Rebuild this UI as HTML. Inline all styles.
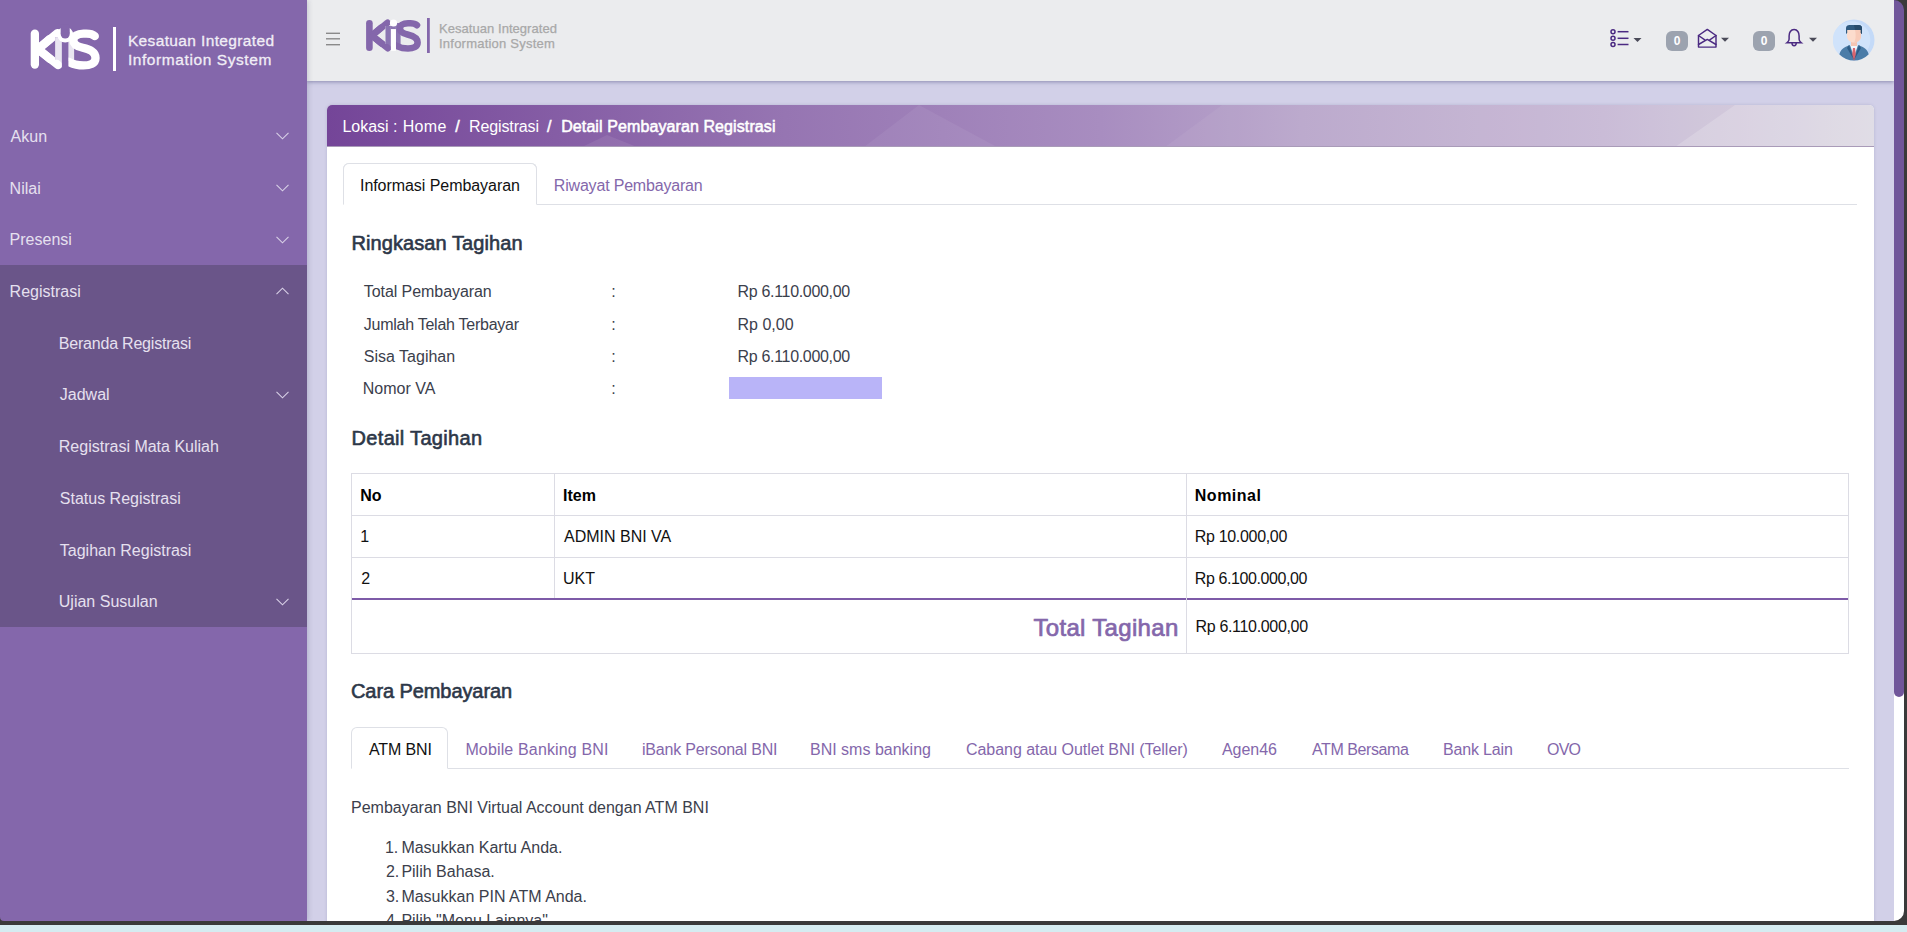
<!DOCTYPE html>
<html><head><meta charset="utf-8">
<style>
*{box-sizing:border-box;margin:0;padding:0}
html,body{width:1907px;height:932px;overflow:hidden}
body{position:relative;background:#D2D0E8;font-family:"Liberation Sans",sans-serif;font-size:16px;color:#333}
.abs{position:absolute;white-space:nowrap}
#sidebar{position:absolute;left:0;top:0;width:307px;height:921px;background:#8467AB;z-index:3;box-shadow:1px 0 5px rgba(60,60,100,.22)}
#grp{position:absolute;left:0;top:265px;width:307px;height:362px;background:#6A5589}
.mi{position:absolute;left:11px;font-size:16px;line-height:24px;color:#E4DDEE}
.sub{left:59px}
.chev{position:absolute;left:276px;width:13px;height:8px}
#header{position:absolute;left:307px;top:0;width:1587px;height:81px;background:#EBECEE;z-index:2;box-shadow:0 1px 4px rgba(80,80,130,.55)}
#card{position:absolute;left:327px;top:105px;width:1547px;height:830px;background:#fff;border-radius:5px 5px 0 0;box-shadow:0 0 3px rgba(100,100,140,.25)}
#crumb{position:absolute;left:0;top:0;width:1547px;height:42px;border-radius:5px 5px 0 0;overflow:hidden;background:linear-gradient(90deg,#744598 0%,#9675B2 29.6%,#A88DC0 50%,#B9A6CB 63%,#C8B9D5 82.5%,#CFC5DA 90%,#D8D4E0 100%);border-bottom:1px solid #A99BB8}
.t16{font-size:16px;line-height:24px}
.tab{position:absolute;height:42px;border:1px solid #DEE0E6;border-bottom:1px solid #fff;border-radius:6px 6px 0 0;background:#fff}
.tabline{position:absolute;height:1px;background:#DEE0E6}
.h5{position:absolute;font-size:20px;line-height:24px;color:#2D3748;font-weight:bold;letter-spacing:-0.6px}
.lnk{color:#8467AB}
table.dt{position:absolute;left:351px;top:473px;width:1498px;border-collapse:collapse}
table.dt td{border:1px solid #DADAE2;padding:0 9px;height:42px;color:#111;font-size:16px;line-height:24px}
#sb{position:absolute;left:1894px;top:0;width:10px;height:921px;background:#fff;z-index:4}
#thumb{position:absolute;left:0;top:0;width:10px;height:697px;background:#70569A;border-radius:0 0 5px 5px}
#frR{position:absolute;left:1904px;top:0;width:3px;height:925px;background:#3A3A3A;z-index:5}
#frB{position:absolute;left:0;top:921px;width:1907px;height:4px;background:#3A3A3A;z-index:5}
#cyan{position:absolute;left:0;top:925px;width:1907px;height:7px;background:#D5ECF1;z-index:5}
.badge{top:31px;width:22px;height:20px;border-radius:6px;background:#9CA3AF;color:#fff;font-size:12px;line-height:20px;text-align:center;font-weight:bold}
.k{position:absolute;white-space:nowrap;font-size:16px;line-height:24px}
.hl{position:absolute;height:1px;background:#DCDCE4}
.vl{position:absolute;width:1px;background:#DCDCE4}
.t{position:absolute;white-space:nowrap;font-family:"Liberation Sans",sans-serif;z-index:4}
</style></head><body>

<div id="sidebar">
  <svg class="abs" style="left:23.4px;top:21.8px" width="90.7" height="55.4" viewBox="0 0 72 44">
    <g>
      <rect x="25.5" y="12" width="5.4" height="24" fill="#E9E5F1"/>
      <rect x="35.9" y="9" width="4.7" height="22" fill="#E9E5F1"/>
      <g fill="none" stroke="#FFFFFF" stroke-linecap="round" stroke-width="6.6">
        <line x1="9.4" y1="9.3" x2="9.4" y2="33.8"/>
        <line x1="12.5" y1="21" x2="21" y2="13.7"/>
        <line x1="13" y1="22.5" x2="21.5" y2="29.5"/>
      </g>
      <clipPath id="kcFFFFFF"><rect x="0" y="0" width="25.5" height="44"/><rect x="25.5" y="0" width="5.4" height="12"/><rect x="25.5" y="30" width="5.4" height="14"/></clipPath>
      <g clip-path="url(#kcFFFFFF)" fill="none" stroke="#FFFFFF" stroke-linecap="round" stroke-width="6.6">
        <line x1="12.5" y1="21" x2="27.5" y2="8.8"/>
        <line x1="13" y1="22.5" x2="27.8" y2="34.2"/>
      </g>
      <clipPath id="scFFFFFF"><rect x="35.9" y="0" width="40" height="44"/></clipPath>
      <path clip-path="url(#scFFFFFF)" d="M57 11.2 C54 8.6,50.5 9.3,48 9.3 C43 9.3,40 11.5,40 14.5 C40 18,43 19.5,47.5 20.5 C53 21.8,57.6 23.5,57.6 28.5 C57.6 33,53 34.5,48 34.5 C43 34.5,39.5 33.5,36 31.5" fill="none" stroke="#FFFFFF" stroke-width="6.6" stroke-linecap="round"/>
      <rect x="30.9" y="15.1" width="5" height="21.7" fill="#8467AB"/>
      <circle cx="33.5" cy="10" r="6.3" fill="#FFFFFF"/>
      <rect x="29.9" y="2" width="7.2" height="7.2" fill="#8467AB"/>
      <circle cx="33.5" cy="9.6" r="3.6" fill="#8467AB"/>
    </g>
  </svg>
  <div class="abs" style="left:113.4px;top:26.6px;width:2.9px;height:44.4px;background:#fff"></div>

  <div id="grp"></div>
  <svg class="chev" style="top:132px" viewBox="0 0 13 8"><path d="M0.5 0.8 L6.5 6.8 L12.5 0.8" fill="none" stroke="#D8D0E6" stroke-width="1.1"/></svg><svg class="chev" style="top:184px" viewBox="0 0 13 8"><path d="M0.5 0.8 L6.5 6.8 L12.5 0.8" fill="none" stroke="#D8D0E6" stroke-width="1.1"/></svg><svg class="chev" style="top:236px" viewBox="0 0 13 8"><path d="M0.5 0.8 L6.5 6.8 L12.5 0.8" fill="none" stroke="#D8D0E6" stroke-width="1.1"/></svg><svg class="chev" style="top:287px" viewBox="0 0 13 8"><path d="M0.5 7.2 L6.5 1.2 L12.5 7.2" fill="none" stroke="#D8D0E6" stroke-width="1.1"/></svg><svg class="chev" style="top:391px" viewBox="0 0 13 8"><path d="M0.5 0.8 L6.5 6.8 L12.5 0.8" fill="none" stroke="#D8D0E6" stroke-width="1.1"/></svg><svg class="chev" style="top:598px" viewBox="0 0 13 8"><path d="M0.5 0.8 L6.5 6.8 L12.5 0.8" fill="none" stroke="#D8D0E6" stroke-width="1.1"/></svg>
</div>

<div id="header">
  <svg class="abs" style="left:19px;top:30px" width="16" height="18" viewBox="0 0 16 18">
    <g stroke="#8A8A8A" stroke-width="1.4"><line x1="0" y1="3.3" x2="14" y2="3.3"/><line x1="0" y1="8.8" x2="14" y2="8.8"/><line x1="0" y1="14.7" x2="14" y2="14.7"/></g>
  </svg>
  <svg class="abs" style="left:53px;top:14px" width="72" height="44" viewBox="0 0 72 44">
    <g>
      <rect x="25.5" y="12" width="5.4" height="24" fill="#8A74B2"/>
      <rect x="35.9" y="9" width="4.7" height="22" fill="#8A74B2"/>
      <g fill="none" stroke="#8467AB" stroke-linecap="round" stroke-width="6.6">
        <line x1="9.4" y1="9.3" x2="9.4" y2="33.8"/>
        <line x1="12.5" y1="21" x2="21" y2="13.7"/>
        <line x1="13" y1="22.5" x2="21.5" y2="29.5"/>
      </g>
      <clipPath id="kc8467AB"><rect x="0" y="0" width="25.5" height="44"/><rect x="25.5" y="0" width="5.4" height="12"/><rect x="25.5" y="30" width="5.4" height="14"/></clipPath>
      <g clip-path="url(#kc8467AB)" fill="none" stroke="#8467AB" stroke-linecap="round" stroke-width="6.6">
        <line x1="12.5" y1="21" x2="27.5" y2="8.8"/>
        <line x1="13" y1="22.5" x2="27.8" y2="34.2"/>
      </g>
      <clipPath id="sc8467AB"><rect x="35.9" y="0" width="40" height="44"/></clipPath>
      <path clip-path="url(#sc8467AB)" d="M57 11.2 C54 8.6,50.5 9.3,48 9.3 C43 9.3,40 11.5,40 14.5 C40 18,43 19.5,47.5 20.5 C53 21.8,57.6 23.5,57.6 28.5 C57.6 33,53 34.5,48 34.5 C43 34.5,39.5 33.5,36 31.5" fill="none" stroke="#8467AB" stroke-width="6.6" stroke-linecap="round"/>
      <rect x="30.9" y="9" width="5" height="6.5" fill="#8A74B2"/>
      <rect x="30.9" y="15.1" width="5" height="21.7" fill="#FFFFFF"/>
      
      <circle cx="33.5" cy="9" r="3.6" fill="#FFFFFF"/>
    </g>
    <rect x="67" y="4" width="2.8" height="35" fill="#8467AB"/>
  </svg>

  <svg class="abs" style="left:1302px;top:27px" width="36" height="22" viewBox="0 0 36 22">
    <g fill="none" stroke="#4B2A82" stroke-width="1.5">
      <circle cx="4" cy="4.7" r="2"/><circle cx="4" cy="11.3" r="2"/><circle cx="4" cy="17.5" r="2"/>
      <line x1="8.6" y1="4.7" x2="19.5" y2="4.7"/><line x1="8.6" y1="11.3" x2="19.5" y2="11.3"/><line x1="8.6" y1="17.5" x2="19.5" y2="17.5"/>
    </g>
    <path d="M24.5 11 L32.5 11 L28.5 15 Z" fill="#4A4A58"/>
  </svg>
  <div class="abs badge" style="left:1359px">0</div>
  <svg class="abs" style="left:1388px;top:26px" width="36" height="24" viewBox="0 0 36 24">
    <g fill="none" stroke="#4B2A82" stroke-width="1.45" stroke-linejoin="round" stroke-linecap="round">
      <path d="M3.5 9.5 L12.3 3.4 L21 9.5 L21 21.1 L3.5 21.1 Z"/>
      <path d="M3.5 18.5 L12.3 13.4 L21 18.5 M3.5 9.5 L9.8 13.9 M21 9.5 L14.8 13.9"/>
    </g>
    <path d="M26 11.8 L34 11.8 L30 15.8 Z" fill="#4A4A58"/>
  </svg>
  <div class="abs badge" style="left:1446px">0</div>
  <svg class="abs" style="left:1477px;top:26px" width="36" height="24" viewBox="0 0 36 24">
    <g fill="none" stroke="#4B2A82" stroke-width="1.5">
      <path d="M10.1 3.6 C6.7 3.6,5.1 6.5,5.1 10 L5.1 13.3 C5.1 14.9,4.1 15.9,2.9 16.8 L17.3 16.8 C16.1 15.9,15.1 14.9,15.1 13.3 L15.1 10 C15.1 6.5,13.5 3.6,10.1 3.6 Z"/>
      <path d="M8 17.1 C8 20.6,12.2 20.6,12.2 17.1"/>
    </g>
    <path d="M25 11.8 L33 11.8 L29 15.8 Z" fill="#4A4A58"/>
  </svg>
  <svg class="abs" style="left:1526px;top:19px" width="42" height="42" viewBox="0 0 42 42">
    <defs><clipPath id="cc"><circle cx="21" cy="21" r="20.5"/></clipPath></defs>
    <circle cx="21" cy="21" r="20.5" fill="#C4DAF8"/>
    <circle cx="18.5" cy="21" r="18.8" fill="#D0E3FB"/>
    <g clip-path="url(#cc)">
      <path d="M5.5 42 C5.5 31,10 28.5,17 26 L25 26 C32 28.5,36.5 31,36.5 42 Z" fill="#4A7CA8"/>
      <path d="M17 26 L21 38 L25 26 Z" fill="#F1F6FB"/>
      <path d="M20 29 L22 29 L23 37 L21 42 L19 37 Z" fill="#D9646E"/>
      <path d="M16 26 L21 41 L14 29 Z M26 26 L21 41 L28 29 Z" fill="#2F5C86"/>
      <rect x="18" y="20" width="6" height="7" fill="#F6C5B3"/>
      <path d="M14 11 L28 11 L28 17 C28 21,25 23.5,21 23.5 C17 23.5,14 21,14 17 Z" fill="#FCDCCD"/>
      <path d="M22 11 L28 11 L28 17 C28 21,25 23.5,21 23.5 C23 21,23 15,22 11 Z" fill="#F8CBB9"/>
      <path d="M13 15 L13 9 C13 7,14.5 5.9,16.5 5.9 L25.5 5.9 C27.5 5.9,29 7,29 9 L29 15 L27.8 14 L27.8 11 L14.2 11 L14.2 14 Z" fill="#2F5A80"/>
      <path d="M21 5.9 L25.5 5.9 C27.5 5.9,29 7,29 9 L29 15 L27.8 14 L27.8 11 L22 11 Z" fill="#264B6C"/>
    </g>
  </svg>
</div>
<div id="card">
  <div id="crumb">
    <svg class="abs" style="left:0;top:0" width="1547" height="42" viewBox="0 0 1547 42">
      <polygon points="537,42 592,0 670,42" fill="#fff" fill-opacity=".06"/>
      <polygon points="255,42 280,30 310,42" fill="#fff" fill-opacity=".08"/>
      <polygon points="895,0 1547,0 1547,42 838,42" fill="#fff" fill-opacity=".05"/>
      <polygon points="1408,0 1547,0 1547,42 1348,42" fill="#fff" fill-opacity=".18"/>
    </svg>
  </div>
</div>

<div class="tab" style="left:343px;top:163px;width:194px"></div>
<div class="tabline" style="left:343px;top:204px;width:1514px"></div>
<div class="tab" style="left:343px;top:163px;width:194px;border-bottom-color:#fff;z-index:1"></div>
<div class="abs" style="left:729px;top:377px;width:153px;height:22px;background:#B9B4F8"></div>
<div class="hl" style="left:351px;top:473px;width:1498px"></div>
<div class="hl" style="left:351px;top:515px;width:1498px"></div>
<div class="hl" style="left:351px;top:557px;width:1498px"></div>
<div class="hl" style="left:351px;top:597.5px;width:1498px;height:2px;background:#7E5BA8"></div>
<div class="hl" style="left:351px;top:653px;width:1498px"></div>
<div class="vl" style="left:351px;top:473px;height:181px"></div>
<div class="vl" style="left:554px;top:473px;height:125px"></div>
<div class="vl" style="left:1186px;top:473px;height:181px"></div>
<div class="vl" style="left:1848px;top:473px;height:181px"></div>
<div class="tabline" style="left:351px;top:768px;width:1498px"></div>
<div class="tab" style="left:351px;top:727px;width:97px;z-index:1"></div>


<div class="t" style="left:127.90px;top:28.53px;font-size:15.5px;line-height:23px;color:#F1EEF6;letter-spacing:0.367px;-webkit-text-stroke:0.3px #F1EEF6">Kesatuan Integrated</div>
<div class="t" style="left:127.90px;top:48.43px;font-size:15.5px;line-height:23px;color:#F1EEF6;letter-spacing:0.582px;-webkit-text-stroke:0.3px #F1EEF6">Information System</div>
<div class="t" style="left:10.60px;top:124.96px;font-size:16px;line-height:24px;color:#E6E0EF">Akun</div>
<div class="t" style="left:9.60px;top:176.66px;font-size:16px;line-height:24px;color:#E6E0EF">Nilai</div>
<div class="t" style="left:9.60px;top:228.36px;font-size:16px;line-height:24px;color:#E6E0EF">Presensi</div>
<div class="t" style="left:9.60px;top:280.06px;font-size:16px;line-height:24px;color:#E6E0EF">Registrasi</div>
<div class="t" style="left:58.80px;top:331.76px;font-size:16px;line-height:24px;color:#E6E0EF;letter-spacing:-0.207px">Beranda Registrasi</div>
<div class="t" style="left:59.80px;top:383.46px;font-size:16px;line-height:24px;color:#E6E0EF">Jadwal</div>
<div class="t" style="left:58.80px;top:435.16px;font-size:16px;line-height:24px;color:#E6E0EF">Registrasi Mata Kuliah</div>
<div class="t" style="left:59.80px;top:486.86px;font-size:16px;line-height:24px;color:#E6E0EF">Status Registrasi</div>
<div class="t" style="left:59.80px;top:538.56px;font-size:16px;line-height:24px;color:#E6E0EF">Tagihan Registrasi</div>
<div class="t" style="left:58.80px;top:590.26px;font-size:16px;line-height:24px;color:#E6E0EF">Ujian Susulan</div>
<div class="t" style="left:439.00px;top:18.50px;font-size:13px;line-height:20px;color:#A8A8A8;letter-spacing:0.047px;-webkit-text-stroke:0.25px #A8A8A8">Kesatuan Integrated</div>
<div class="t" style="left:439.00px;top:34.20px;font-size:13px;line-height:20px;color:#A8A8A8;letter-spacing:0.226px;-webkit-text-stroke:0.25px #A8A8A8">Information System</div>
<div class="t" style="left:342.40px;top:115.16px;font-size:16px;line-height:24px;color:#FFFFFF">Lokasi :</div>
<div class="t" style="left:402.70px;top:115.16px;font-size:16px;line-height:24px;color:#FFFFFF;letter-spacing:0.306px">Home</div>
<div class="t" style="left:455.30px;top:115.16px;font-size:16px;line-height:24px;color:#FFFFFF;-webkit-text-stroke:0.5px #fff">/</div>
<div class="t" style="left:469.00px;top:115.16px;font-size:16px;line-height:24px;color:#FFFFFF;letter-spacing:-0.120px">Registrasi</div>
<div class="t" style="left:547.00px;top:115.16px;font-size:16px;line-height:24px;color:#FFFFFF;-webkit-text-stroke:0.5px #fff">/</div>
<div class="t" style="left:561.20px;top:115.16px;font-size:16px;line-height:24px;color:#FFFFFF;letter-spacing:0.097px;-webkit-text-stroke:0.55px #fff">Detail Pembayaran Registrasi</div>
<div class="t" style="left:360.00px;top:173.76px;font-size:16px;line-height:24px;color:#111111;letter-spacing:-0.056px">Informasi Pembayaran</div>
<div class="t" style="left:553.80px;top:173.76px;font-size:16px;line-height:24px;color:#8467AB;letter-spacing:-0.187px">Riwayat Pembayaran</div>
<div class="t" style="left:351.40px;top:228.17px;font-size:20px;line-height:30px;color:#2D3748;letter-spacing:0.088px;-webkit-text-stroke:0.6px #2D3748">Ringkasan Tagihan</div>
<div class="t" style="left:363.80px;top:279.86px;font-size:16px;line-height:24px;color:#3B404C;letter-spacing:-0.071px">Total Pembayaran</div>
<div class="t" style="left:611.30px;top:279.86px;font-size:16px;line-height:24px;color:#3B404C">:</div>
<div class="t" style="left:737.50px;top:279.86px;font-size:16px;line-height:24px;color:#3B404C;letter-spacing:-0.317px">Rp 6.110.000,00</div>
<div class="t" style="left:363.80px;top:313.06px;font-size:16px;line-height:24px;color:#3B404C;letter-spacing:-0.257px">Jumlah Telah Terbayar</div>
<div class="t" style="left:611.30px;top:313.06px;font-size:16px;line-height:24px;color:#3B404C">:</div>
<div class="t" style="left:737.50px;top:313.06px;font-size:16px;line-height:24px;color:#3B404C">Rp 0,00</div>
<div class="t" style="left:363.80px;top:344.76px;font-size:16px;line-height:24px;color:#3B404C">Sisa Tagihan</div>
<div class="t" style="left:611.30px;top:344.76px;font-size:16px;line-height:24px;color:#3B404C">:</div>
<div class="t" style="left:737.50px;top:344.76px;font-size:16px;line-height:24px;color:#3B404C;letter-spacing:-0.317px">Rp 6.110.000,00</div>
<div class="t" style="left:362.80px;top:377.36px;font-size:16px;line-height:24px;color:#3B404C">Nomor VA</div>
<div class="t" style="left:611.30px;top:377.36px;font-size:16px;line-height:24px;color:#3B404C">:</div>
<div class="t" style="left:351.60px;top:422.97px;font-size:20px;line-height:30px;color:#2D3748;letter-spacing:0.313px;-webkit-text-stroke:0.6px #2D3748">Detail Tagihan</div>
<div class="t" style="left:360.30px;top:484.06px;font-size:16px;line-height:24px;color:#000;font-weight:700">No</div>
<div class="t" style="left:563.00px;top:484.06px;font-size:16px;line-height:24px;color:#000;font-weight:700">Item</div>
<div class="t" style="left:1194.80px;top:484.06px;font-size:16px;line-height:24px;color:#000;font-weight:700;letter-spacing:0.505px">Nominal</div>
<div class="t" style="left:360.30px;top:525.26px;font-size:16px;line-height:24px;color:#111111">1</div>
<div class="t" style="left:564.00px;top:525.26px;font-size:16px;line-height:24px;color:#111111">ADMIN BNI VA</div>
<div class="t" style="left:1194.80px;top:525.26px;font-size:16px;line-height:24px;color:#111111;letter-spacing:-0.325px">Rp 10.000,00</div>
<div class="t" style="left:361.30px;top:567.06px;font-size:16px;line-height:24px;color:#111111">2</div>
<div class="t" style="left:563.00px;top:567.06px;font-size:16px;line-height:24px;color:#111111">UKT</div>
<div class="t" style="left:1194.80px;top:567.06px;font-size:16px;line-height:24px;color:#111111;letter-spacing:-0.402px">Rp 6.100.000,00</div>
<div class="t" style="left:1033.40px;top:609.78px;font-size:24px;line-height:36px;color:#8467AB;letter-spacing:0.326px;-webkit-text-stroke:0.7px #8467AB">Total Tagihan</div>
<div class="t" style="left:1195.50px;top:614.96px;font-size:16px;line-height:24px;color:#111111;letter-spacing:-0.324px">Rp 6.110.000,00</div>
<div class="t" style="left:351.00px;top:676.37px;font-size:20px;line-height:30px;color:#2D3748;letter-spacing:-0.084px;-webkit-text-stroke:0.6px #2D3748">Cara Pembayaran</div>
<div class="t" style="left:369.00px;top:738.36px;font-size:16px;line-height:24px;color:#111111;letter-spacing:-0.143px">ATM BNI</div>
<div class="t" style="left:465.40px;top:738.36px;font-size:16px;line-height:24px;color:#8467AB;letter-spacing:0.149px">Mobile Banking BNI</div>
<div class="t" style="left:642.00px;top:738.36px;font-size:16px;line-height:24px;color:#8467AB;letter-spacing:-0.193px">iBank Personal BNI</div>
<div class="t" style="left:810.00px;top:738.36px;font-size:16px;line-height:24px;color:#8467AB">BNI sms banking</div>
<div class="t" style="left:966.00px;top:738.36px;font-size:16px;line-height:24px;color:#8467AB;letter-spacing:-0.046px">Cabang atau Outlet BNI (Teller)</div>
<div class="t" style="left:1222.00px;top:738.36px;font-size:16px;line-height:24px;color:#8467AB;letter-spacing:-0.053px">Agen46</div>
<div class="t" style="left:1312.00px;top:738.36px;font-size:16px;line-height:24px;color:#8467AB;letter-spacing:-0.416px">ATM Bersama</div>
<div class="t" style="left:1443.00px;top:738.36px;font-size:16px;line-height:24px;color:#8467AB;letter-spacing:-0.158px">Bank Lain</div>
<div class="t" style="left:1547.00px;top:738.36px;font-size:16px;line-height:24px;color:#8467AB;letter-spacing:-0.809px">OVO</div>
<div class="t" style="left:351.00px;top:795.76px;font-size:16px;line-height:24px;color:#3B404C">Pembayaran BNI Virtual Account dengan ATM BNI</div>
<div class="t" style="left:384.90px;top:835.66px;font-size:16px;line-height:24px;color:#3B404C">1.</div>
<div class="t" style="left:401.40px;top:835.66px;font-size:16px;line-height:24px;color:#3B404C">Masukkan Kartu Anda.</div>
<div class="t" style="left:385.90px;top:860.16px;font-size:16px;line-height:24px;color:#3B404C">2.</div>
<div class="t" style="left:401.40px;top:860.16px;font-size:16px;line-height:24px;color:#3B404C">Pilih Bahasa.</div>
<div class="t" style="left:385.90px;top:884.66px;font-size:16px;line-height:24px;color:#3B404C">3.</div>
<div class="t" style="left:401.40px;top:884.66px;font-size:16px;line-height:24px;color:#3B404C">Masukkan PIN ATM Anda.</div>
<div class="t" style="left:385.90px;top:909.16px;font-size:16px;line-height:24px;color:#3B404C">4.</div>
<div class="t" style="left:401.40px;top:909.16px;font-size:16px;line-height:24px;color:#3B404C">Pilih "Menu Lainnya".</div>
<div id="sb"><div id="thumb"></div></div>
<svg class="abs" style="left:0;top:0;z-index:5" width="1907" height="925" viewBox="0 0 1907 925"><path fill-rule="evenodd" fill="#3A3A3A" d="M0 0 H1907 V925 H0 Z M0 0 H1894 A10 10 0 0 1 1904 10 V911 A10 10 0 0 1 1894 921 H4 A4 4 0 0 1 0 917 Z"/></svg>
<div id="cyan"></div>
</body></html>
